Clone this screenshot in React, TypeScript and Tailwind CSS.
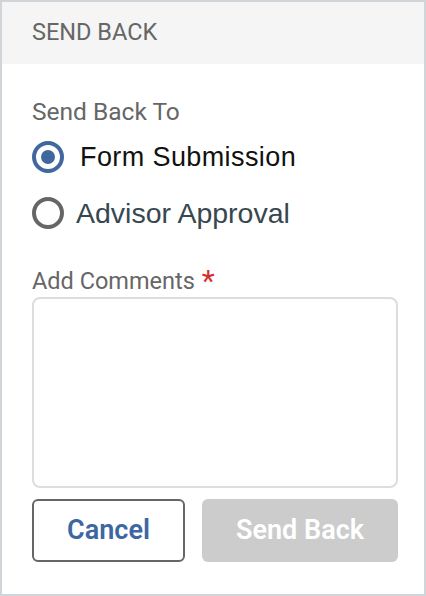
import { useState } from 'react'

const roboto = { fontFamily: 'Roboto, "Liberation Sans", sans-serif' }

function Radio({ checked }: { checked: boolean }) {
  return (
    <span
      className={`flex h-[32px] w-[32px] shrink-0 items-center justify-center rounded-full border-4 ${
        checked ? 'border-[#41679f]' : 'border-[#666666]'
      }`}
    >
      {checked && <span className="h-[14px] w-[14px] rounded-full bg-[#41679f]" />}
    </span>
  )
}

export default function App() {
  const [target, setTarget] = useState('form')
  const [comments, setComments] = useState('')

  return (
    <div
      className="flex h-[596px] w-[426px] flex-col border-2 border-[#cfd5d9] bg-white"
      style={roboto}
    >
      {/* header */}
      <div className="flex h-[62px] shrink-0 items-center bg-[#f5f5f5] pl-[30px] text-[23.5px] text-[#666666]">
        SEND BACK
      </div>

      <div className="flex flex-col pl-[30px] pr-[26px] pt-[34px]">
        <div className="text-[24.5px] leading-[28px] text-[#666666]">Send Back To</div>

        <label className="mt-[11px] flex h-[40px] cursor-pointer items-center" onClick={() => setTarget('form')}>
          <Radio checked={target === 'form'} />
          <span className="ml-[16px] font-['Liberation_Sans',Arial,sans-serif] text-[27px] leading-[30px] tracking-[0.4px] text-[#111111]">
            Form Submission
          </span>
        </label>

        <label className="mt-[16px] flex h-[40px] cursor-pointer items-center" onClick={() => setTarget('advisor')}>
          <Radio checked={target === 'advisor'} />
          <span className="ml-[12px] font-['Liberation_Sans',Arial,sans-serif] text-[28.5px] leading-[32px] text-[#37474f]">
            Advisor Approval
          </span>
        </label>

        <div className="mt-[34px] flex h-[28px] items-center text-[23.5px] leading-[28px] text-[#666666]">
          Add Comments
          <span className="ml-[7px] text-[30px] leading-[28px] text-[#d32f2f]">*</span>
        </div>

        <textarea
          value={comments}
          onChange={(e) => setComments(e.target.value)}
          className="mt-[2px] h-[191px] w-full resize-none rounded-[8px] border-2 border-[#dddddd] p-2 outline-none"
        />

        <div className="mt-[11px] flex gap-[17px]">
          <button className="h-[63px] w-[153px] rounded-[6px] border-2 border-[#666666] bg-white text-[27px] font-semibold text-[#3d67a3]">
            Cancel
          </button>
          <button
            disabled
            className="h-[63px] flex-1 rounded-[6px] bg-[#cccccc] text-[27px] font-semibold text-white"
          >
            Send Back
          </button>
        </div>
      </div>
    </div>
  )
}
